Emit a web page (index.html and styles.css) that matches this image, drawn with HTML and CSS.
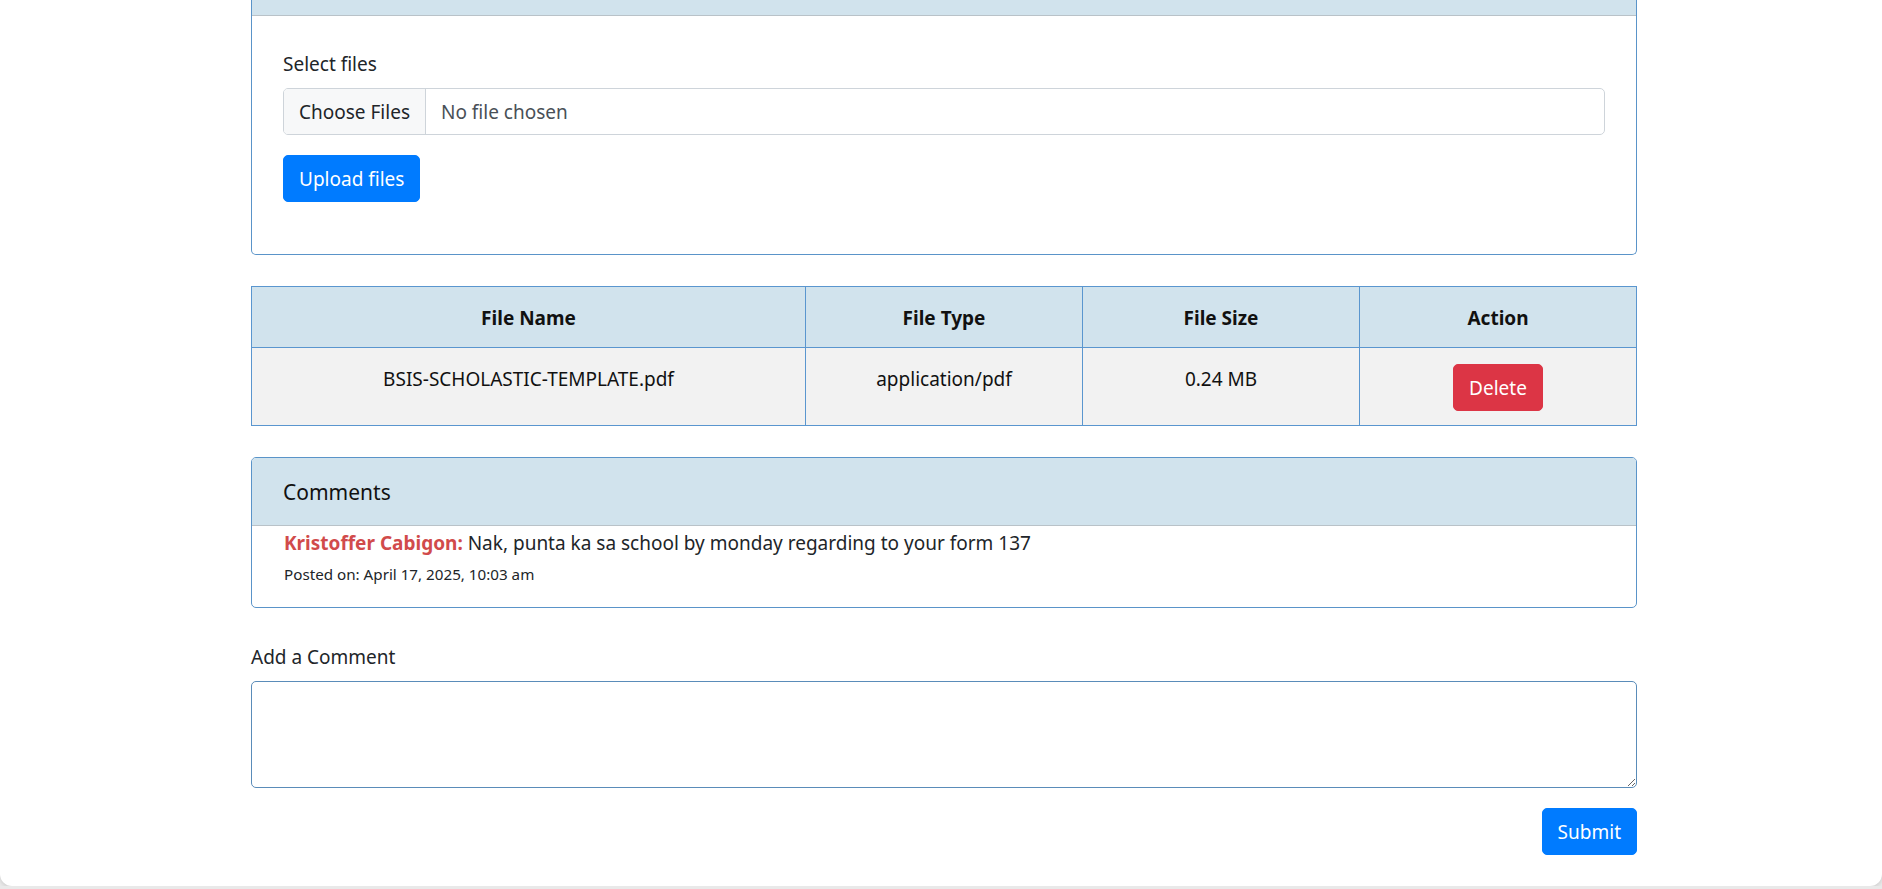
FILE: index.html
```html
<!DOCTYPE html>
<html lang="en">
<head>
<meta charset="utf-8">
<title>Files and Comments</title>
<link rel="stylesheet" href="styles.css">
</head>
<body>
<div class="page">
  <div class="container">
    <section class="card upload-card">
      <div class="card-header upload-header"></div>
      <div class="upload-body">
        <form class="upload-form">
          <label class="field-label" for="files">Select files</label>
          <input type="file" id="files" class="file-input" multiple>
          <button type="button" class="btn btn-primary">Upload files</button>
        </form>
      </div>
    </section>

    <table class="files-table">
      <thead>
        <tr>
          <th class="col-name">File Name</th>
          <th class="col-small">File Type</th>
          <th class="col-small">File Size</th>
          <th class="col-small">Action</th>
        </tr>
      </thead>
      <tbody>
        <tr>
          <td>BSIS-SCHOLASTIC-TEMPLATE.pdf</td>
          <td>application/pdf</td>
          <td>0.24 MB</td>
          <td><button type="button" class="btn btn-danger">Delete</button></td>
        </tr>
      </tbody>
    </table>

    <section class="card comments-card">
      <div class="card-header comments-header">
        <h5 class="card-title">Comments</h5>
      </div>
      <div class="comments-body">
        <p class="comment"><strong class="author">Kristoffer Cabigon:</strong> Nak, punta ka sa school by monday regarding to your form 137</p>
        <small class="posted">Posted on: April 17, 2025, 10:03 am</small>
      </div>
    </section>

    <form class="comment-form">
      <label class="field-label" for="comment">Add a Comment</label>
      <textarea id="comment" class="comment-input" rows="3"></textarea>
      <div class="form-actions">
        <button type="button" class="btn btn-primary btn-submit">Submit</button>
      </div>
    </form>
  </div>
</div>
</body>
</html>
```

FILE: styles.css
```css
* {
  box-sizing: border-box;
}

html {
  background: #e9e9e9;
}

body {
  margin: 0;
  font-family: "Noto Sans", "Open Sans", sans-serif;
  font-size: 19px;
  line-height: 30px;
  color: #212529;
  background: #e9e9e9;
}

.page {
  background: #ffffff;
  border-radius: 0 0 12px 12px;
  box-shadow: 0 1px 4px rgba(0, 0, 0, 0.14);
}

.container {
  width: 1386px;
  margin-left: 251px;
  padding-bottom: 31px;
}

.card {
  border: 1px solid #5a94c9;
  border-radius: 5px;
  background: #ffffff;
  overflow: hidden;
}

.card-header {
  background: #d1e3ed;
  border-bottom: 1px solid #b9c2c8;
}

.upload-card {
  border-top: 0;
  border-top-left-radius: 0;
  border-top-right-radius: 0;
}

.upload-header {
  height: 16px;
}

.upload-body {
  padding: 33px 31px 52px;
}

.upload-form {
  display: flex;
  flex-direction: column;
  align-items: flex-start;
}

.field-label {
  display: block;
  margin-bottom: 9px;
  line-height: 30px;
  color: #212529;
}

.file-input {
  display: block;
  width: 100%;
  height: 47px;
  margin: 0 0 20px;
  padding: 0;
  border: 1px solid #ced4da;
  border-radius: 5px;
  background: #ffffff;
  color: #495057;
  font-family: inherit;
  font-size: 19px;
  line-height: 45px;
  overflow: hidden;
}

.file-input::file-selector-button {
  height: 45px;
  margin: 0 15px 0 0;
  padding: 0 15px;
  border: 0;
  border-right: 1px solid #ced4da;
  border-radius: 0;
  background: #f7f8f9;
  color: #212529;
  font-family: inherit;
  font-size: 19px;
}

.btn {
  display: inline-block;
  height: 47px;
  padding: 1px 15px 0;
  border: 1px solid transparent;
  border-radius: 5px;
  font-family: inherit;
  font-size: 19px;
  line-height: 44px;
  color: #ffffff;
  cursor: pointer;
}

.btn-primary {
  background: #007bff;
  border-color: #007bff;
}

.btn-danger {
  background: #dc3545;
  border-color: #dc3545;
}

.files-table {
  width: 100%;
  margin-top: 31px;
  border-collapse: collapse;
  color: #111111;
}

.files-table th,
.files-table td {
  border: 1px solid #5a96cf;
  padding: 16px 15px 14px;
  text-align: center;
  vertical-align: top;
  line-height: 30px;
}

.files-table th {
  background: #d1e3ed;
  font-weight: 700;
}

.files-table td {
  background: #f2f2f2;
  font-weight: 400;
}

.col-name {
  width: 40%;
}

.col-small {
  width: 20%;
}

.comments-card {
  margin-top: 31px;
}

.comments-header {
  height: 68px;
  padding: 21px 31px 20px;
}

.card-title {
  margin: 0;
  font-size: 21px;
  line-height: 26px;
  font-weight: 400;
  color: #111111;
}

.comments-body {
  padding: 2px 32px 21px;
}

.comment {
  margin: 0;
  line-height: 30px;
}

.author {
  color: #d14b4b;
  font-weight: 700;
}

.posted {
  display: block;
  margin-top: 4px;
  font-size: 15.2px;
  line-height: 24px;
}

.comment-form {
  margin-top: 34px;
}

.comment-form .field-label {
  margin-bottom: 9px;
}

.comment-input {
  display: block;
  width: 100%;
  height: 107px;
  padding: 7px 15px;
  border: 1px solid #5a8cb9;
  border-radius: 5px;
  font-family: inherit;
  font-size: 19px;
  line-height: 30px;
  color: #495057;
  background: #ffffff;
}

.form-actions {
  display: flex;
  justify-content: flex-end;
  margin-top: 20px;
}
```
